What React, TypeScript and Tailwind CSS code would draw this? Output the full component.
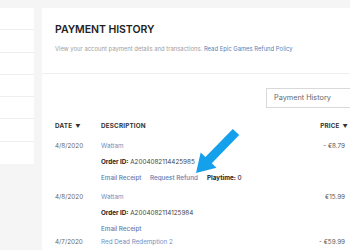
import React from 'react';

const rows = [
  { date: '4/8/2020', title: 'Wattam', order: 'A2004082114425985', price: '- €8.79', refund: true },
  { date: '4/8/2020', title: 'Wattam', order: 'A2004082114125984', price: '€15.99', refund: false },
  { date: '4/7/2020', title: 'Red Dead Redemption 2', order: '', price: '- €59.99', refund: false },
];

const Caret = () => <span className="ml-[3px] inline-block text-[5px] align-middle">▼</span>;

export default function App() {
  return (
    <div
      className="relative flex h-[250px] w-[350px] gap-2 overflow-hidden bg-[#f5f5f5] pt-2"
      style={{ fontFamily: 'Inter, "Noto Sans", sans-serif' }}
    >
      {/* sidebar */}
      <div className="flex w-[34px] shrink-0 flex-col self-start bg-white">
        {Array.from({ length: 7 }).map((_, i) => (
          <div key={i} className="h-[22.3px] border-b border-[#eeeeee] last:border-b-0" />
        ))}
      </div>

      {/* main */}
      <div className="flex w-[330px] shrink-0 flex-col gap-px bg-[#efefef]">
        <div className="h-[65px] shrink-0 bg-white pl-[13px] pt-[17px]">
          <h1 className="text-[10.5px] font-semibold leading-none tracking-[-0.005em] text-[#222]">PAYMENT HISTORY</h1>
          <p className="mt-[9px] whitespace-nowrap text-[5.9px] text-[#a0a0a0]">
            View your account payment details and transactions.{' '}
            <span className="text-[#5d7fb3]">Read Epic Games Refund Policy</span>
          </p>
        </div>

        <div className="min-h-0 flex-1 bg-white pl-[13px] pt-[14px]">
          <div className="flex pl-[211px]">
            <div className="flex h-[20px] w-[100px] shrink-0 items-center border border-[#d9d9d9] pl-[7px] text-[7.3px] text-[#666]">
              Payment History
            </div>
          </div>

          <div className="mt-[14px] w-[293px] text-[6.3px]">
            <div className="flex h-[10px] items-center font-bold uppercase tracking-[0.03em] text-[#333]">
              <div className="w-[46px]">
                Date
                <Caret />
              </div>
              <div className="flex-1">Description</div>
              <div>
                Price
                <Caret />
              </div>
            </div>

            {rows.map((r, i) => (
              <div key={i} className={i === 0 ? 'mt-[9px] flex' : i === 1 ? 'mt-[9px] flex' : 'mt-[3px] flex'}>
                <div className="w-[46px] leading-[10px] text-[#666]">{r.date}</div>
                <div className="flex flex-1 flex-col gap-[6px] leading-[10px]">
                  <div className="text-[#6f8fc2]">{r.title}</div>
                  {r.order && (
                    <div className="text-[#444]">
                      <span className="font-bold text-[#222]">Order ID:</span> {r.order}
                    </div>
                  )}
                  {r.order && (
                    <div className="flex font-medium text-[#5a7db3]">
                      <span className="w-[49px]">Email Receipt</span>
                      {r.refund && <span className="w-[57px]">Request Refund</span>}
                      {r.refund && (
                        <span className="text-[#333]">
                          <span className="font-bold text-[#222]">Playtime:</span> 0
                        </span>
                      )}
                    </div>
                  )}
                </div>
                <div className="pr-[3px] leading-[10px] text-[#555]">{r.price}</div>
              </div>
            ))}
          </div>
        </div>
      </div>

      {/* annotation arrow */}
      <svg className="absolute left-[190px] top-[126px] h-[52px] w-[52px]" viewBox="0 0 52 52">
        <polygon
          points="42.8,2.9 49.2,9.1 21.8,37.2 26.5,41.8 6,47 10.7,26.4 15.4,31.0"
          fill="#15a0ec"
        />
      </svg>
    </div>
  );
}
